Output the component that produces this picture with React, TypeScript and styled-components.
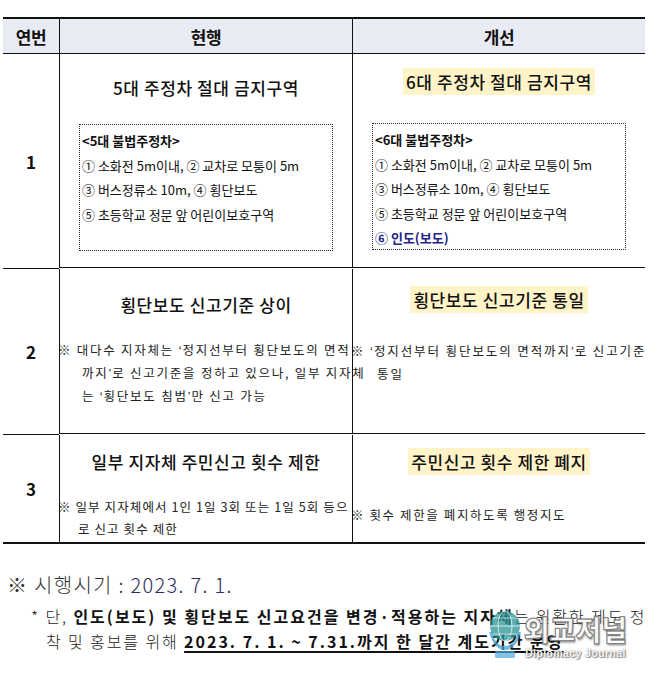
import React from 'react'
import styled, { createGlobalStyle } from 'styled-components'

const GlobalStyle = createGlobalStyle`
  html, body {
    margin: 0;
    padding: 0;
    background: #ffffff;
  }
  body {
    font-family: "Noto Sans CJK KR", "Noto Sans", sans-serif;
    color: #111;
  }
`

const Page = styled.div`
  position: relative;
  width: 652px;
  height: 679px;
  overflow: hidden;
  padding-top: 17px;
  box-sizing: border-box;
`

const Table = styled.div`
  display: grid;
  grid-template-columns: 56px 293px 293px;
  margin-left: 3px;
  width: 642px;
  border-top: 2px solid #111;
  border-bottom: 2px solid #111;
`

const HeadCell = styled.div<{ $first?: boolean }>`
  height: 34px;
  background: #e8eaf4;
  border-bottom: 1.5px solid #111;
  border-left: ${({ $first }) => ($first ? 'none' : '1px solid #111')};
  display: flex;
  align-items: center;
  justify-content: center;
  font-size: 17px;
  font-weight: 700;
  letter-spacing: -0.5px;
`

const NumCell = styled.div<{ $h: number; $last?: boolean }>`
  height: ${({ $h }) => $h}px;
  border-bottom: ${({ $last }) => ($last ? 'none' : '1px solid #111')};
  display: flex;
  align-items: center;
  justify-content: center;
  font-size: 17px;
  font-weight: 700;
`

const Cell = styled.div<{ $h: number; $last?: boolean }>`
  height: ${({ $h }) => $h}px;
  border-left: 1px solid #111;
  border-bottom: ${({ $last }) => ($last ? 'none' : '1px solid #111')};
  display: flex;
  flex-direction: column;
  box-sizing: border-box;
`

const TitleRow = styled.div<{ $top: number }>`
  margin-top: ${({ $top }) => $top}px;
  height: 26px;
  display: flex;
  align-items: center;
  justify-content: center;
`

const Title = styled.span<{ $mark?: boolean }>`
  font-size: 17px;
  font-weight: 500;
  letter-spacing: 0.6px;
  line-height: 27px;
  padding: 0 3px;
  background: ${({ $mark }) => ($mark ? '#fff3c8' : 'transparent')};
`

const DotBox = styled.div<{ $gap: number }>`
  margin: ${({ $gap }) => $gap}px 19px 0 19px;
  height: 127px;
  border: 1px dotted #222;
  padding: 4px 0 0 2px;
  box-sizing: border-box;
`

const BoxLine = styled.div<{ $bold?: boolean; $blue?: boolean }>`
  font-size: 13px;
  line-height: 24.5px;
  height: 24.5px;
  white-space: nowrap;
  font-weight: ${({ $bold, $blue }) => ($bold || $blue ? 700 : 400)};
  color: ${({ $blue }) => ($blue ? '#23238a' : '#111')};
`

const Note = styled.div<{ $top: number; $indent: number; $spacing: number }>`
  margin-top: ${({ $top }) => $top}px;
  margin-left: -3px;
  padding-left: ${({ $indent }) => $indent}px;
  text-indent: -${({ $indent }) => $indent - 1}px;
  font-family: "Noto Sans CJK KR", sans-serif;
  font-size: 12.5px;
  line-height: 22px;
  letter-spacing: ${({ $spacing }) => $spacing}px;
  color: #222;
  white-space: pre;
`

/* narrow Latin quote marks instead of the full-width CJK ones */
const Q = styled.span`
  font-family: "Liberation Sans", Arial, sans-serif;
  letter-spacing: 1px;
`

const Footer = styled.div`
  padding: 26px 0 0 7px;
  font-family: "Noto Sans CJK KR", sans-serif;
`

const When = styled.div`
  font-size: 20px;
  font-weight: 300;
  line-height: 30px;
  letter-spacing: 1.3px;
  color: #333;
  margin-bottom: 4px;
`

const DateText = styled.span`
  color: #2b2b5c;
`

const Sub = styled.div<{ $pad: number }>`
  padding-left: ${({ $pad }) => $pad}px;
  font-size: 16px;
  line-height: 25px;
  letter-spacing: 1.9px;
  white-space: nowrap;
  color: #222;
  font-weight: 300;
`

const Strong = styled.b<{ $under?: boolean }>`
  font-weight: 700;
  color: #111;
  letter-spacing: 2px;
  text-decoration: ${({ $under }) => ($under ? 'underline' : 'none')};
  text-underline-offset: 3px;
  text-decoration-thickness: 1.5px;
`

const Watermark = styled.div`
  position: absolute;
  left: 487px;
  top: 606px;
  display: flex;
  align-items: flex-start;
  gap: 1px;
  pointer-events: none;
`

const Brand = styled.div`
  display: flex;
  flex-direction: column;
  align-items: center;
  margin-top: 5px;
  white-space: nowrap;
`

const BrandKo = styled.div`
  font-size: 28px;
  font-weight: 900;
  line-height: 36px;
  color: rgba(255, 255, 255, 0.95);
  -webkit-text-stroke: 1.3px rgba(110, 110, 110, 0.8);
  text-shadow: 1px 2px 2px rgba(0, 0, 0, 0.35);
`

const BrandEn = styled.div`
  font-family: "Liberation Sans", Arial, sans-serif;
  font-size: 10.5px;
  font-weight: 700;
  letter-spacing: 0.4px;
  line-height: 13px;
  color: rgba(255, 255, 255, 0.95);
  text-shadow: 0 0 2px rgba(0, 0, 0, 0.6), 1px 1px 1px rgba(0, 0, 0, 0.4);
`

const Globe = () => (
  <svg width="36" height="56" viewBox="0 0 36 56">
    <circle cx="18" cy="20" r="15" fill="rgba(40,150,150,0.75)" />
    <ellipse cx="18" cy="20" rx="7" ry="15" fill="none" stroke="rgba(255,255,255,0.7)" strokeWidth="1" />
    <line x1="3" y1="20" x2="33" y2="20" stroke="rgba(255,255,255,0.7)" strokeWidth="1" />
    <path d="M6 12 H30 M6 28 H30" stroke="rgba(255,255,255,0.6)" strokeWidth="1" />
    <path d="M2 26 C6 40 12 44 18 44 C24 44 30 40 34 26 L31 26 C28 36 24 40 18 40 C12 40 8 36 5 26 Z" fill="rgba(70,160,210,0.75)" />
    <rect x="8" y="45" width="20" height="7" rx="1.5" fill="rgba(80,170,220,0.7)" />
  </svg>
)

export default function App() {
  return (
    <Page>
      <GlobalStyle />
      <Table>
        <HeadCell $first>연번</HeadCell>
        <HeadCell>현행</HeadCell>
        <HeadCell>개선</HeadCell>

        <NumCell $h={214}>1</NumCell>
        <Cell $h={214}>
          <TitleRow $top={20}>
            <Title>5대 주정차 절대 금지구역</Title>
          </TitleRow>
          <DotBox $gap={24}>
            <BoxLine $bold>&lt;5대 불법주정차&gt;</BoxLine>
            <BoxLine>① 소화전 5m이내, ② 교차로 모퉁이 5m</BoxLine>
            <BoxLine>③ 버스정류소 10m, ④ 횡단보도</BoxLine>
            <BoxLine>⑤ 초등학교 정문 앞 어린이보호구역</BoxLine>
          </DotBox>
        </Cell>
        <Cell $h={214}>
          <TitleRow $top={14}>
            <Title $mark>6대 주정차 절대 금지구역</Title>
          </TitleRow>
          <DotBox $gap={29}>
            <BoxLine $bold>&lt;6대 불법주정차&gt;</BoxLine>
            <BoxLine>① 소화전 5m이내, ② 교차로 모퉁이 5m</BoxLine>
            <BoxLine>③ 버스정류소 10m, ④ 횡단보도</BoxLine>
            <BoxLine>⑤ 초등학교 정문 앞 어린이보호구역</BoxLine>
            <BoxLine $blue>⑥ 인도(보도)</BoxLine>
          </DotBox>
        </Cell>

        <NumCell $h={165}>2</NumCell>
        <Cell $h={165}>
          <TitleRow $top={22}>
            <Title>횡단보도 신고기준 상이</Title>
          </TitleRow>
          <Note $top={22} $indent={25} $spacing={1.75}>
            ※ 대다수 지자체는 <Q>‘</Q>정지선부터 횡단보도의 면적{'\n'}까지<Q>’</Q>로 신고기준을 정하고 있으나, 일부 지자체{'\n'}는 <Q>‘</Q>횡단보도 침범<Q>’</Q>만 신고 가능
          </Note>
        </Cell>
        <Cell $h={165}>
          <TitleRow $top={17}>
            <Title $mark>횡단보도 신고기준 통일</Title>
          </TitleRow>
          <Note $top={28} $indent={27} $spacing={1.9}>
            ※ <Q>‘</Q>정지선부터 횡단보도의 면적까지<Q>’</Q>로 신고기준{'\n'}통일
          </Note>
        </Cell>

        <NumCell $h={107} $last>3</NumCell>
        <Cell $h={107} $last>
          <TitleRow $top={13}>
            <Title>일부 지자체 주민신고 횟수 제한</Title>
          </TitleRow>
          <Note $top={22} $indent={21} $spacing={1.1}>
            ※ 일부 지자체에서 1인 1일 3회 또는 1일 5회 등으{'\n'}로 신고 횟수 제한
          </Note>
        </Cell>
        <Cell $h={107} $last>
          <TitleRow $top={13}>
            <Title $mark>주민신고 횟수 제한 폐지</Title>
          </TitleRow>
          <Note $top={30} $indent={20} $spacing={1.6}>
            ※ 횟수 제한을 폐지하도록 행정지도
          </Note>
        </Cell>
      </Table>

      <Footer>
        <When>
          ※ 시행시기 : <DateText>2023. 7. 1.</DateText>
        </When>
        <Sub $pad={24}>
          * 단, <Strong>인도(보도) 및 횡단보도 신고요건을 변경·적용하는 지자체</Strong>는 원활한 제도 정
        </Sub>
        <Sub $pad={39}>
          착 및 홍보를 위해 <Strong $under>2023. 7. 1. ~ 7.31.까지 한 달간 계도기간 운영</Strong>
        </Sub>
      </Footer>

      <Watermark>
        <Globe />
        <Brand>
          <BrandKo>외교저널</BrandKo>
          <BrandEn>Diplomacy Journal</BrandEn>
        </Brand>
      </Watermark>
    </Page>
  )
}
